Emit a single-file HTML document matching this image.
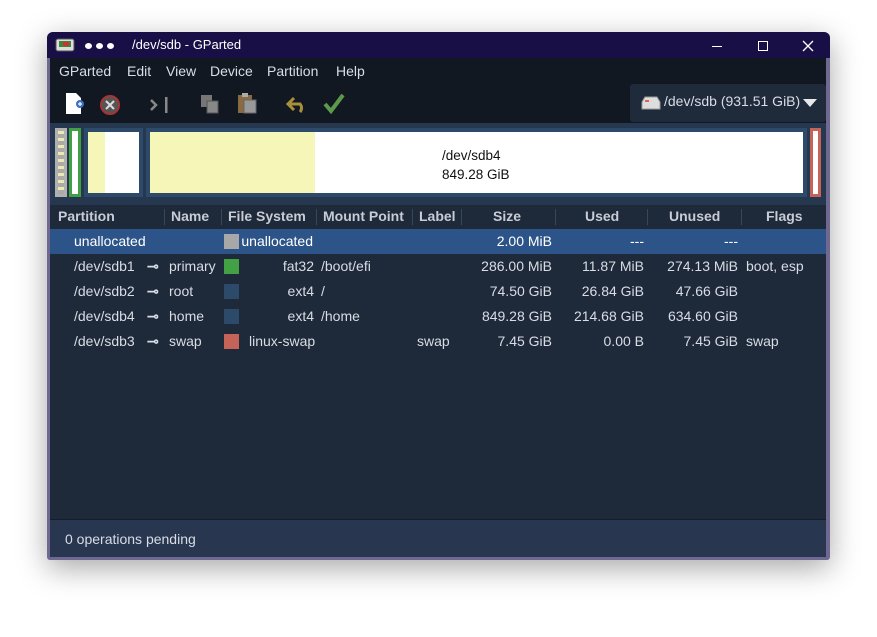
<!DOCTYPE html>
<html><head><style>
*{margin:0;padding:0;box-sizing:border-box}
body{width:877px;height:637px;background:#fff;font-family:"Liberation Sans",sans-serif;font-size:14px;color:#d8dde6;position:relative;overflow:hidden}
.win{position:absolute;left:47px;top:32px;width:783px;height:528px;background:#6f6890;border-radius:6px 6px 3px 3px;box-shadow:0 8px 30px rgba(0,0,0,.35);overflow:hidden}
.title{position:absolute;left:0;top:0;width:783px;height:26px;background:#170f45;color:#fff}
.a{position:absolute;white-space:nowrap}
.menu{position:absolute;left:3px;top:26px;width:776px;height:65px;background:#121821}
.map{position:absolute;left:3px;top:91px;width:776px;height:82px;background:#263750}
.hdr{position:absolute;left:3px;top:173px;width:776px;height:24px;background:#1e2939;font-weight:bold;color:#c7ccd6}
.list{position:absolute;left:3px;top:197px;width:776px;height:290px;background:#1e2939}
.status{position:absolute;left:3px;top:487px;width:776px;height:38px;background:#283650;border-top:1px solid #151d29}
.row{position:absolute;left:0;width:776px;height:25px;line-height:25px}
.r{text-align:right}
.sw{position:absolute;top:5px;width:15px;height:15px}
</style></head><body>
<div class="win">
 <div class="title">
  <svg class="a" style="left:8px;top:6px" width="20" height="14"><rect x="1" y="1" width="18" height="12" rx="2" fill="#ddd" stroke="#555"/><rect x="4" y="3" width="12" height="6" fill="#3a8a3a"/><rect x="8" y="4" width="6" height="4" fill="#c33"/></svg>
  <div class="a" style="left:38px;top:11px;height:7px;line-height:0"><span style="display:inline-block;width:7px;height:6px;border-radius:50%;background:#fff;margin-right:4px"></span><span style="display:inline-block;width:7px;height:6px;border-radius:50%;background:#fff;margin-right:4px"></span><span style="display:inline-block;width:7px;height:6px;border-radius:50%;background:#fff"></span></div>
  <div class="a" style="left:85px;top:5px;font-size:13px">/dev/sdb - GParted</div>
  <div class="a" style="left:665px;top:14px;width:10px;height:1px;background:#fff"></div>
  <div class="a" style="left:711px;top:9px;width:10px;height:10px;border:1.3px solid #fff"></div>
  <svg class="a" style="left:755px;top:8px" width="12" height="12"><path d="M1 1L11 11M11 1L1 11" stroke="#fff" stroke-width="1.3"/></svg>
 </div>
 <div class="menu">
  <div class="a" style="left:9px;top:5px">GParted</div>
  <div class="a" style="left:77px;top:5px">Edit</div>
  <div class="a" style="left:116px;top:5px">View</div>
  <div class="a" style="left:160px;top:5px">Device</div>
  <div class="a" style="left:217px;top:5px">Partition</div>
  <div class="a" style="left:286px;top:5px">Help</div>
  <svg class="a" style="left:14px;top:34px" width="22" height="24"><path d="M2 1h10l5 5v16H2z" fill="#fff"/><circle cx="16" cy="12" r="4" fill="#3a6fc4"/><path d="M14 12h4M16 10v4" stroke="#fff" stroke-width="1.2"/></svg>
  <svg class="a" style="left:49px;top:36px" width="22" height="22"><circle cx="11" cy="11" r="9" fill="#555" stroke="#a33" stroke-width="2"/><path d="M7 7l8 8M15 7l-8 8" stroke="#ddd" stroke-width="2"/></svg>
  <svg class="a" style="left:99px;top:37px" width="22" height="20"><path d="M2 5l5 5-5 5" stroke="#888" stroke-width="2.5" fill="none"/><rect x="16" y="2" width="2.5" height="16" fill="#888"/></svg>
  <svg class="a" style="left:150px;top:36px" width="20" height="20"><rect x="1" y="1" width="11" height="12" fill="#777"/><rect x="7" y="7" width="11" height="12" fill="#888" stroke="#555"/></svg>
  <svg class="a" style="left:187px;top:34px" width="22" height="22"><rect x="1" y="3" width="14" height="18" fill="#8a6a40"/><rect x="7" y="8" width="12" height="13" fill="#999" stroke="#666"/><rect x="5" y="1" width="6" height="4" fill="#aaa"/></svg>
  <svg class="a" style="left:236px;top:38px" width="24" height="18"><path d="M8 2L2 8l6 6" stroke="#a8903a" stroke-width="3" fill="none"/><path d="M3 8h11a6 6 0 0 1 0 8" stroke="#a8903a" stroke-width="3" fill="none"/></svg>
  <svg class="a" style="left:273px;top:34px" width="22" height="22"><path d="M2 12l6 7L20 3" stroke="#5a9a4a" stroke-width="4" fill="none"/></svg>
  <div class="a" style="left:580px;top:26px;width:196px;height:38px;background:#1f2a3b;border-radius:3px"></div>
  <svg class="a" style="left:590px;top:37px" width="22" height="16"><path d="M2 7l3-5h12l3 5v7H2z" fill="#ddd" stroke="#999"/><rect x="5" y="5" width="4" height="2" fill="#d64"/></svg>
  <div class="a" style="left:614px;top:35px">/dev/sdb (931.51 GiB)</div>
  <svg class="a" style="left:752px;top:40px" width="16" height="10"><path d="M1 1h14L8 9z" fill="#e8e8e8"/></svg>
 </div>
 <div class="map">
  <div class="a" style="left:5px;top:5px;width:12px;height:69px;background:repeating-linear-gradient(#eee9b0 0 3px,#aaa 3px 7px);border:3px solid #b0b0b0"></div>
  <div class="a" style="left:19px;top:5px;width:12px;height:69px;border:3px solid #42a044;background:#fff"></div>
  <div class="a" style="left:34px;top:5px;width:59px;height:69px;border:4px solid #2e4a6b;background:linear-gradient(90deg,#f6f6b9 0 17px,#fff 17px)"></div>
  <div class="a" style="left:96px;top:5px;width:661px;height:69px;border:4px solid #2e4a6b;background:linear-gradient(90deg,#f6f6b9 0 165px,#fff 165px)"></div>
  <div class="a" style="left:392px;top:23px;color:#111;font-size:13.5px;line-height:19px">/dev/sdb4<br>849.28 GiB</div>
  <div class="a" style="left:760px;top:5px;width:11px;height:69px;border:3px solid #c56358;background:#fff"></div>
 </div>
 <div class="hdr">
  <div class="a" style="left:8px;top:3px">Partition</div>
  <div class="a" style="left:114px;top:4px;width:1px;height:16px;background:#3a4658"></div>
  <div class="a" style="left:121px;top:3px">Name</div>
  <div class="a" style="left:171px;top:4px;width:1px;height:16px;background:#3a4658"></div>
  <div class="a" style="left:178px;top:3px">File System</div>
  <div class="a" style="left:266px;top:4px;width:1px;height:16px;background:#3a4658"></div>
  <div class="a" style="left:273px;top:3px">Mount Point</div>
  <div class="a" style="left:362px;top:4px;width:1px;height:16px;background:#3a4658"></div>
  <div class="a" style="left:369px;top:3px">Label</div>
  <div class="a" style="left:411px;top:4px;width:1px;height:16px;background:#3a4658"></div>
  <div class="a" style="left:443px;top:3px">Size</div>
  <div class="a" style="left:505px;top:4px;width:1px;height:16px;background:#3a4658"></div>
  <div class="a" style="left:535px;top:3px">Used</div>
  <div class="a" style="left:597px;top:4px;width:1px;height:16px;background:#3a4658"></div>
  <div class="a" style="left:619px;top:3px">Unused</div>
  <div class="a" style="left:691px;top:4px;width:1px;height:16px;background:#3a4658"></div>
  <div class="a" style="left:716px;top:3px">Flags</div>
 </div>
 <div class="list">
  <div class="row" style="top:0;background:#2c5489;color:#fff">
   <span class="a" style="left:24px">unallocated</span>
   <div class="sw" style="left:174px;background:#a8a8a8"></div>
   <span class="a" style="left:163px">&nbsp;</span><span class="a" style="left:163px;width:100px;text-align:right">unallocated</span>
   <span class="a r" style="left:400px;width:102px">2.00 MiB</span>
   <span class="a r" style="left:500px;width:94px">---</span>
   <span class="a r" style="left:590px;width:98px">---</span>
  </div>
  <div class="row" style="top:25px">
   <span class="a" style="left:24px">/dev/sdb1</span><span class="a" style="left:97px;font-weight:bold">⊸</span><span class="a" style="left:119px">primary</span>
   <div class="sw" style="left:174px;background:#43a145"></div>
   <span class="a r" style="left:190px;width:74px">fat32</span><span class="a" style="left:271px">/boot/efi</span>
   <span class="a r" style="left:400px;width:102px">286.00 MiB</span><span class="a r" style="left:500px;width:94px">11.87 MiB</span><span class="a r" style="left:590px;width:98px">274.13 MiB</span><span class="a" style="left:696px">boot, esp</span>
  </div>
  <div class="row" style="top:50px">
   <span class="a" style="left:24px">/dev/sdb2</span><span class="a" style="left:97px;font-weight:bold">⊸</span><span class="a" style="left:119px">root</span>
   <div class="sw" style="left:174px;background:#2e4a6b"></div>
   <span class="a r" style="left:190px;width:74px">ext4</span><span class="a" style="left:271px">/</span>
   <span class="a r" style="left:400px;width:102px">74.50 GiB</span><span class="a r" style="left:500px;width:94px">26.84 GiB</span><span class="a r" style="left:590px;width:98px">47.66 GiB</span>
  </div>
  <div class="row" style="top:75px">
   <span class="a" style="left:24px">/dev/sdb4</span><span class="a" style="left:97px;font-weight:bold">⊸</span><span class="a" style="left:119px">home</span>
   <div class="sw" style="left:174px;background:#2e4a6b"></div>
   <span class="a r" style="left:190px;width:74px">ext4</span><span class="a" style="left:271px">/home</span>
   <span class="a r" style="left:400px;width:102px">849.28 GiB</span><span class="a r" style="left:500px;width:94px">214.68 GiB</span><span class="a r" style="left:590px;width:98px">634.60 GiB</span>
  </div>
  <div class="row" style="top:100px">
   <span class="a" style="left:24px">/dev/sdb3</span><span class="a" style="left:97px;font-weight:bold">⊸</span><span class="a" style="left:119px">swap</span>
   <div class="sw" style="left:174px;background:#c56358"></div>
   <span class="a" style="left:199px">linux-swap</span><span class="a" style="left:367px">swap</span>
   <span class="a r" style="left:400px;width:102px">7.45 GiB</span><span class="a r" style="left:500px;width:94px">0.00 B</span><span class="a r" style="left:590px;width:98px">7.45 GiB</span><span class="a" style="left:696px">swap</span>
  </div>
 </div>
 <div class="status"><div class="a" style="left:15px;top:11px">0 operations pending</div></div>
</div>
</body></html>
